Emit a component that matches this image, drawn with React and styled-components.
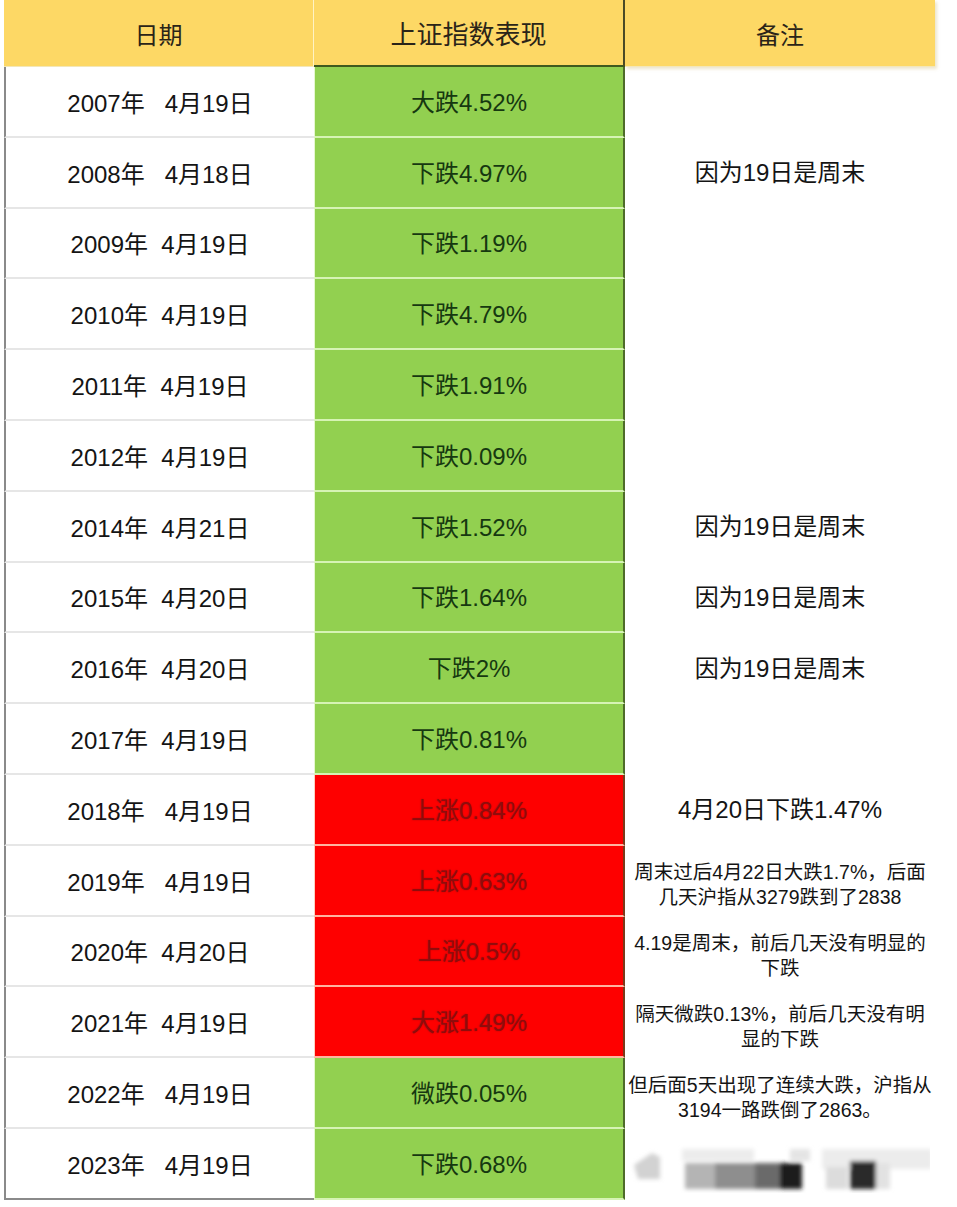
import React from 'react'
import styled, { createGlobalStyle } from 'styled-components'

const GlobalStyle = createGlobalStyle`
	html, body {
		margin: 0;
		padding: 0;
		background: #ffffff;
	}
	body {
		font-family: "Liberation Sans", "Noto Sans CJK SC", sans-serif;
	}
`

const Page = styled.div`
	width: 957px;
	height: 1207px;
	padding-left: 4px;
	box-sizing: border-box;
	overflow: hidden;
`

const Table = styled.div`
	width: 931px;
	display: grid;
	grid-template-columns: 310px 311px 310px;
`

const HeadCell = styled.div`
	height: 67px;
	background: #fdd865;
	display: flex;
	align-items: center;
	justify-content: center;
	font-size: ${props => props.$size || 24}px;
	color: #2a2418;
	box-sizing: border-box;
	border-right: ${props => (props.$dark ? '2px solid #4b4a26' : props.$light ? '1px solid #fff3c4' : 'none')};
	border-bottom: ${props => (props.$dark ? '2px solid #3f5a1e' : '1px solid #f3e7b8')};
	box-shadow: ${props => (props.$last ? '2px 2px 3px rgba(200, 180, 110, 0.35)' : 'none')};
`

const DateCell = styled.div`
	height: 70.8px;
	display: flex;
	align-items: center;
	justify-content: center;
	box-sizing: border-box;
	border-left: 2px solid #8a8a8a;
	border-bottom: ${props => (props.$last ? '2px solid #8a8a8a' : '2px solid #e6e6e6')};
	font-size: 24px;
	color: #141414;
	white-space: pre;
`

const MoveCell = styled.div`
	height: 70.8px;
	display: flex;
	align-items: center;
	justify-content: center;
	box-sizing: border-box;
	background: ${props => (props.$up ? '#fe0000' : '#92d050')};
	border-left: 1px solid ${props => (props.$up ? '#ffd0c0' : '#e6f7d0')};
	border-right: 2px solid ${props => (props.$up ? '#7a3a1a' : '#4e6b2a')};
	border-bottom: 2px solid ${props => (props.$up ? '#ffb4a0' : '#d6f3b4')};
	font-size: 24px;
	color: ${props => (props.$up ? '#8e0c0c' : '#163810')};
	text-shadow: ${props => (props.$up ? '0 0 1.5px rgba(140, 10, 10, 0.8)' : 'none')};
	padding-bottom: 2px;
`

const NoteCell = styled.div`
	height: 70.8px;
	display: flex;
	flex-direction: column;
	align-items: center;
	justify-content: center;
	text-align: center;
	color: #141414;
	font-size: ${props => (props.$small ? '19.5px' : '24px')};
	line-height: ${props => (props.$small ? '25px' : '30px')};
	padding-top: ${props => (props.$small ? '8px' : '0')};
	box-sizing: border-box;
	white-space: nowrap;
`

const Blur = styled.svg`
	display: block;
	margin-top: 8px;
`

const rows = [
	{ date: '2007年   4月19日', move: '大跌4.52%' },
	{ date: '2008年   4月18日', move: '下跌4.97%', note: ['因为19日是周末'] },
	{ date: '2009年  4月19日', move: '下跌1.19%' },
	{ date: '2010年  4月19日', move: '下跌4.79%' },
	{ date: '2011年  4月19日', move: '下跌1.91%' },
	{ date: '2012年  4月19日', move: '下跌0.09%' },
	{ date: '2014年  4月21日', move: '下跌1.52%', note: ['因为19日是周末'] },
	{ date: '2015年  4月20日', move: '下跌1.64%', note: ['因为19日是周末'] },
	{ date: '2016年  4月20日', move: '下跌2%', note: ['因为19日是周末'] },
	{ date: '2017年  4月19日', move: '下跌0.81%' },
	{ date: '2018年   4月19日', move: '上涨0.84%', up: true, note: ['4月20日下跌1.47%'] },
	{ date: '2019年   4月19日', move: '上涨0.63%', up: true, small: true, note: ['周末过后4月22日大跌1.7%，后面', '几天沪指从3279跌到了2838'] },
	{ date: '2020年  4月20日', move: '上涨0.5%', up: true, small: true, note: ['4.19是周末，前后几天没有明显的', '下跌'] },
	{ date: '2021年  4月19日', move: '大涨1.49%', up: true, small: true, note: ['隔天微跌0.13%，前后几天没有明', '显的下跌'] },
	{ date: '2022年   4月19日', move: '微跌0.05%', small: true, note: ['但后面5天出现了连续大跌，沪指从', '3194一路跌倒了2863。'] },
	{ date: '2023年   4月19日', move: '下跌0.68%', blur: true },
]

const Watermark = () => (
	<Blur width="300" height="50" viewBox="0 0 300 50">
		<defs>
			<filter id="wm" x="-10%" y="-30%" width="120%" height="160%">
				<feGaussianBlur stdDeviation="2.2" />
			</filter>
		</defs>
		<g filter="url(#wm)">
			<path d="M4 22 L22 10 L30 14 L30 36 L8 36 Z" fill="#d2d2d2" />
			<rect x="52" y="6" width="72" height="12" fill="#ececec" />
			<rect x="55" y="20" width="30" height="26" fill="#b4b4b4" />
			<rect x="85" y="20" width="40" height="26" fill="#8e8e8e" />
			<rect x="125" y="20" width="25" height="26" fill="#6a6a6a" />
			<rect x="150" y="20" width="22" height="26" fill="#1e1e1e" />
			<rect x="160" y="6" width="20" height="12" fill="#e4e4e4" />
			<rect x="192" y="6" width="110" height="20" fill="#ececec" />
			<rect x="196" y="24" width="22" height="22" fill="#dcdcdc" />
			<rect x="220" y="18" width="26" height="28" fill="#2a2a2a" />
			<rect x="246" y="20" width="14" height="26" fill="#e2e2e2" />
		</g>
	</Blur>
)

const App = () => (
	<Page>
		<GlobalStyle />
		<Table>
			<HeadCell $light>日期</HeadCell>
			<HeadCell $dark $size={26}>上证指数表现</HeadCell>
			<HeadCell $last>备注</HeadCell>
			{rows.map((row, index) => (
				<React.Fragment key={row.date}>
					<DateCell $last={index === rows.length - 1}>{row.date}</DateCell>
					<MoveCell $up={row.up}>{row.move}</MoveCell>
					<NoteCell $small={row.small}>
						{row.note && row.note.map(line => <span key={line}>{line}</span>)}
						{row.blur && <Watermark />}
					</NoteCell>
				</React.Fragment>
			))}
		</Table>
	</Page>
)

export default App
